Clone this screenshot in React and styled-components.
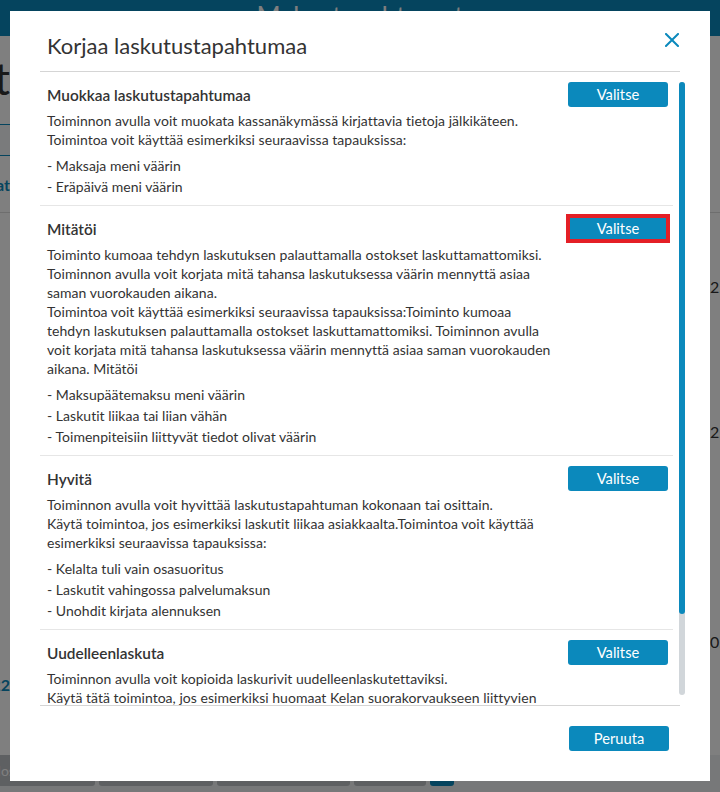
import React, { useLayoutEffect, useRef, useState } from "react";
import styled, { createGlobalStyle } from "styled-components";

const BLUE = "#0b89bc";
const TEXT = "#333";

const Global = createGlobalStyle`
  html, body { margin: 0; padding: 0; }
  body {
    font-family: Lato, "Noto Sans", sans-serif;
    color: ${TEXT};
    background: #fff;
  }
  * { box-sizing: border-box; }
`;

/* ---------- page behind the dialog ---------- */

const Page = styled.div`
  width: 720px;
  height: 792px;
  overflow: hidden;
  display: flex;
  flex-direction: column;
  background: #fff;
`;

const TopBar = styled.header`
  flex: none;
  height: 36px;
  background: ${BLUE};
  color: #fff;
  display: flex;
  justify-content: center;
  align-items: center;
  padding-bottom: 5px;
  font-size: 26px;
`;

const Row = styled.div`
  flex: none;
  display: grid;
  grid-template-columns: 10px 1fr 10px;
  height: ${(p) => p.$h}px;
  border-bottom: ${(p) => (p.$rule ? "1px solid #dcdcdc" : "none")};
`;

const Lead = styled.div`
  overflow: hidden;
  display: flex;
  justify-content: flex-end;
  align-items: flex-start;
  white-space: nowrap;
  padding-top: ${(p) => p.$top || 0}px;
`;

const Tail = styled.div`
  grid-column: 3;
  overflow: hidden;
  white-space: nowrap;
  padding-top: ${(p) => p.$top || 0}px;
  font-size: 16px;
  line-height: 20px;
`;

const PageHeading = styled.h1`
  margin: 0;
  font-size: 44px;
  font-weight: 400;
  line-height: 52px;
  color: ${TEXT};
`;

const TabStrip = styled.div`
  width: 100%;
  height: 32px;
  border-top: 1px solid ${BLUE};
  border-bottom: 1px solid ${BLUE};
  background: #f4f6f8;
`;

const LinkText = styled.span`
  font-size: 16px;
  line-height: 20px;
  font-weight: 700;
  color: ${BLUE};
`;

const ActionBar = styled.div`
  flex: 1;
  display: flex;
  align-items: flex-start;
  gap: 4px;
  margin-left: -29px;
  background: #eef0f2;
`;

const ActionButton = styled.button`
  flex: none;
  width: ${(p) => p.$w}px;
  height: 31px;
  border: none;
  border-radius: 3px;
  padding: 0 12px;
  text-align: left;
  font-family: inherit;
  font-size: 14px;
  color: #fff;
  background: ${(p) => (p.$primary ? BLUE : "#bcc0c4")};
`;

/* ---------- dialog ---------- */

const Backdrop = styled.div`
  position: fixed;
  inset: 0;
  background: rgba(0, 0, 0, 0.5);
`;

const Dialog = styled.div`
  position: fixed;
  left: 10px;
  top: 11px;
  width: 700px;
  height: 770px;
  background: #fff;
  display: flex;
  flex-direction: column;
`;

const DialogHeader = styled.div`
  flex: none;
  height: 60px;
  display: flex;
  justify-content: space-between;
  align-items: flex-start;
  padding: 22px 31px 12px 37px;
`;

const DialogTitle = styled.h2`
  margin: 0;
  font-size: 22px;
  font-weight: 400;
  line-height: 26px;
  color: ${TEXT};
`;

const CloseButton = styled.button`
  width: 14px;
  height: 14px;
  padding: 0;
  border: none;
  background: none;
  display: block;
  cursor: pointer;
  svg { display: block; }
`;

const Divider = styled.div`
  flex: none;
  height: 1px;
  margin: 0 30px;
  background: #d5d5d5;
`;

const BodyFrame = styled.div`
  flex: 1;
  min-height: 0;
  display: flex;
  margin: 0 24px 0 30px;
`;

const Scroller = styled.div`
  flex: 1;
  min-width: 0;
  overflow-y: auto;
  scrollbar-width: none;
  &::-webkit-scrollbar { display: none; }
`;

const Rail = styled.div`
  flex: none;
  width: 13px;
  padding: 10px 1px 10px 6px;
  display: flex;
`;

const Track = styled.div`
  flex: 1;
  position: relative;
  border-radius: 3px;
  background: #d1d6da;
`;

const Thumb = styled.div`
  position: absolute;
  left: 0;
  right: 0;
  border-radius: 3px;
  background: ${BLUE};
`;

const Section = styled.section`
  padding: 10px 5px 8px 7px;
  border-bottom: 1px solid #e6e6e6;
  &:last-child { border-bottom: none; }
`;

const SectionHead = styled.div`
  display: flex;
  justify-content: space-between;
  align-items: center;
  height: 25px;
`;

const SectionTitle = styled.h3`
  margin: 0;
  font-size: 15.4px;
  font-weight: 600;
  line-height: 20px;
  color: ${TEXT};
`;

const PrimaryButton = styled.button`
  flex: none;
  width: 100px;
  height: 25px;
  padding: 0;
  border: none;
  border-radius: ${(p) => (p.$marked ? 0 : 3)}px;
  background: ${BLUE};
  color: #fff;
  font-family: inherit;
  font-size: 14.7px;
  line-height: 25px;
  cursor: pointer;
  outline: ${(p) => (p.$marked ? "4px solid #e41f26" : "none")};
  outline-offset: -2px;
`;

const Description = styled.p`
  margin: 4px 0 0;
  max-width: 506px;
  font-size: 14px;
  line-height: 19px;
  letter-spacing: 0.03px;
`;

const CaseList = styled.ul`
  margin: 6px 0 0;
  padding: 0;
  list-style: none;
`;

const CaseItem = styled.li`
  font-size: 14px;
  line-height: 21px;
  letter-spacing: 0.03px;
`;

const DialogFooter = styled.div`
  flex: none;
  height: 75px;
  display: flex;
  justify-content: flex-end;
  align-items: flex-start;
  padding: 20px 41px 30px;
`;

const actions = [
  {
    title: "Muokkaa laskutustapahtumaa",
    lines: [
      "Toiminnon avulla voit muokata kassanäkymässä kirjattavia tietoja jälkikäteen.",
      "Toimintoa voit käyttää esimerkiksi seuraavissa tapauksissa:",
    ],
    cases: ["Maksaja meni väärin", "Eräpäivä meni väärin"],
  },
  {
    title: "Mitätöi",
    marked: true,
    lines: [
      "Toiminto kumoaa tehdyn laskutuksen palauttamalla ostokset laskuttamattomiksi. Toiminnon avulla voit korjata mitä tahansa laskutuksessa väärin mennyttä asiaa saman vuorokauden aikana.",
      "Toimintoa voit käyttää esimerkiksi seuraavissa tapauksissa:Toiminto kumoaa tehdyn laskutuksen palauttamalla ostokset laskuttamattomiksi. Toiminnon avulla voit korjata mitä tahansa laskutuksessa väärin mennyttä asiaa saman vuorokauden aikana. Mitätöi",
    ],
    cases: [
      "Maksupäätemaksu meni väärin",
      "Laskutit liikaa tai liian vähän",
      "Toimenpiteisiin liittyvät tiedot olivat väärin",
    ],
  },
  {
    title: "Hyvitä",
    lines: [
      "Toiminnon avulla voit hyvittää laskutustapahtuman kokonaan tai osittain.",
      "Käytä toimintoa, jos esimerkiksi laskutit liikaa asiakkaalta.Toimintoa voit käyttää esimerkiksi seuraavissa tapauksissa:",
    ],
    cases: [
      "Kelalta tuli vain osasuoritus",
      "Laskutit vahingossa palvelumaksun",
      "Unohdit kirjata alennuksen",
    ],
  },
  {
    title: "Uudelleenlaskuta",
    lines: [
      "Toiminnon avulla voit kopioida laskurivit uudelleenlaskutettaviksi.",
      "Käytä tätä toimintoa, jos esimerkiksi huomaat Kelan suorakorvaukseen liittyvien tietojen olleen virheelliset. Toimintoa voit käyttää esimerkiksi seuraavissa tapauksissa:",
    ],
    cases: ["Kelan päätös muuttui", "Laskurivit menivät väärälle maksajalle"],
  },
];

function CloseIcon() {
  return (
    <svg width="14" height="14" viewBox="0 0 14 14" fill="none">
      <path d="M1 1L13 13M13 1L1 13" stroke={BLUE} strokeWidth="2" strokeLinecap="square" />
    </svg>
  );
}

function ActionSection({ title, lines, cases, marked }) {
  return (
    <Section>
      <SectionHead>
        <SectionTitle>{title}</SectionTitle>
        <PrimaryButton $marked={marked}>Valitse</PrimaryButton>
      </SectionHead>
      <Description>
        {lines.map((l, i) => (
          <React.Fragment key={i}>
            {i > 0 && <br />}
            {l}
          </React.Fragment>
        ))}
      </Description>
      <CaseList>
        {cases.map((c) => (
          <CaseItem key={c}>- {c}</CaseItem>
        ))}
      </CaseList>
    </Section>
  );
}

/* Scroll area with a slim always-visible rail beside it */
function ScrollPane({ children }) {
  const ref = useRef(null);
  const [bar, setBar] = useState({ size: 0.87, offset: 0 });

  const update = () => {
    const el = ref.current;
    if (!el) return;
    const { clientHeight, scrollHeight, scrollTop } = el;
    const size = Math.min(1, clientHeight / scrollHeight);
    const offset = scrollHeight > clientHeight ? scrollTop / scrollHeight : 0;
    setBar({ size, offset });
  };

  useLayoutEffect(update, []);

  return (
    <BodyFrame>
      <Scroller ref={ref} onScroll={update}>
        {children}
      </Scroller>
      <Rail>
        <Track>
          <Thumb style={{ top: `${bar.offset * 100}%`, height: `${bar.size * 100}%` }} />
        </Track>
      </Rail>
    </BodyFrame>
  );
}

export default function App() {
  return (
    <>
      <Global />
      <Page>
        <TopBar>Maksutapahtumat</TopBar>
        <Row $h={88}>
          <Lead $top={16}>
            <PageHeading>Maksutapahtumat</PageHeading>
          </Lead>
        </Row>
        <Row $h={32}>
          <Lead>
            <TabStrip />
          </Lead>
        </Row>
        <Row $h={57} $rule>
          <Lead $top={19}>
            <LinkText>Maksupäätetapahtumat</LinkText>
          </Lead>
        </Row>
        <Row $h={148}>
          <Tail $top={64}>2.450,00</Tail>
        </Row>
        <Row $h={142}>
          <Tail $top={61}>2.120,00</Tail>
        </Row>
        <Row $h={252}>
          <Lead $top={172}>
            <LinkText>12.12.2022</LinkText>
          </Lead>
          <Tail $top={129}>0.00</Tail>
        </Row>
        <ActionBar>
          <ActionButton $w={124}>Tulosta</ActionButton>
          <ActionButton $w={114} />
          <ActionButton $w={133} />
          <ActionButton $w={72} />
          <ActionButton $w={22} $primary />
        </ActionBar>
      </Page>

      <Backdrop />
      <Dialog role="dialog" aria-modal="true">
        <DialogHeader>
          <DialogTitle>Korjaa laskutustapahtumaa</DialogTitle>
          <CloseButton aria-label="Sulje">
            <CloseIcon />
          </CloseButton>
        </DialogHeader>
        <Divider />
        <ScrollPane>
          {actions.map((a) => (
            <ActionSection key={a.title} {...a} />
          ))}
        </ScrollPane>
        <Divider />
        <DialogFooter>
          <PrimaryButton>Peruuta</PrimaryButton>
        </DialogFooter>
      </Dialog>
    </>
  );
}
